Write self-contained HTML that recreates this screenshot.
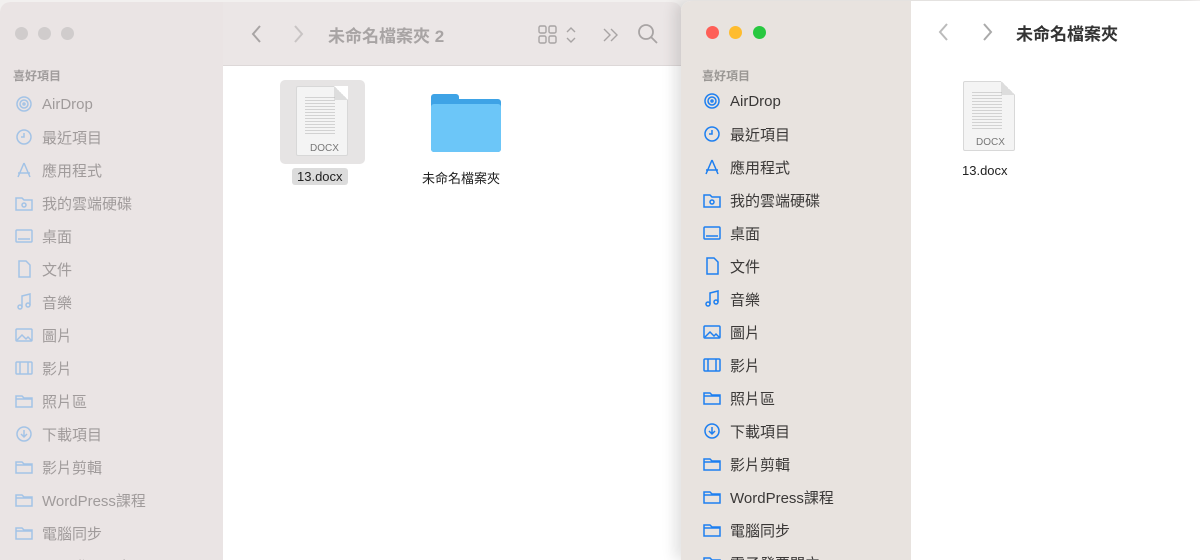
<!DOCTYPE html><html><head><meta charset="utf-8"><style>
*{margin:0;padding:0;box-sizing:border-box}
html,body{width:1200px;height:560px;overflow:hidden}
body{background:#f2f0ef;font-family:"Liberation Sans","Noto Sans CJK TC",sans-serif;position:relative}
.w{position:absolute;overflow:hidden}
.sb{position:absolute;top:0;bottom:0}
.it{position:absolute;left:0;height:24px;display:flex;align-items:center;font-size:15px;white-space:nowrap;width:200px}
.it svg{width:18px;height:18px;margin-right:9px;flex:none}
.dot{position:absolute;width:13px;height:13px;border-radius:50%}
.hd{position:absolute;font-size:12px;font-weight:bold}
</style></head><body>
<div class="w" style="left:0;top:2px;width:682px;height:558px;background:#fff;border-radius:10px 10px 0 0">
 <div class="sb" style="left:0;width:223px;background:#eae4e4">
  <div class="dot" style="left:15px;top:25px;background:#d0cccc"></div>
  <div class="dot" style="left:38px;top:25px;background:#d0cccc"></div>
  <div class="dot" style="left:61px;top:25px;background:#d0cccc"></div>
  <div class="hd" style="left:13px;top:65px;color:#a09c9c">喜好項目</div>
 </div>
 <div style="position:absolute;left:223px;top:0;width:459px;height:64px;background:#ebe6e6;border-bottom:1px solid #ddd8d8">
  <svg style="position:absolute;left:27px;top:22px" width="14" height="20"><path d="M10 2L3 10L10 18" stroke="#a8a4a4" stroke-width="2" fill="none"/></svg>
  <svg style="position:absolute;left:68px;top:22px" width="14" height="20"><path d="M4 2L11 10L4 18" stroke="#c8c4c4" stroke-width="2" fill="none"/></svg>
  <div style="position:absolute;left:105px;top:20px;font-size:17px;font-weight:bold;color:#a8a4a4">未命名檔案夾 2</div>
  <svg style="position:absolute;left:315px;top:23px" width="40" height="20" fill="none" stroke="#a8a4a4" stroke-width="1.4"><rect x="1" y="1" width="7" height="7" rx="1.5"/><rect x="11" y="1" width="7" height="7" rx="1.5"/><rect x="1" y="11" width="7" height="7" rx="1.5"/><rect x="11" y="11" width="7" height="7" rx="1.5"/><path d="M29 7l4-4 4 4M29 13l4 4 4-4"/></svg>
  <svg style="position:absolute;left:378px;top:25px" width="20" height="16" fill="none" stroke="#a8a4a4" stroke-width="1.4"><path d="M3 2l6 6-6 6M10 2l6 6-6 6"/></svg>
  <svg style="position:absolute;left:414px;top:21px" width="22" height="22" fill="none" stroke="#a8a4a4" stroke-width="1.8"><circle cx="9" cy="9" r="7"/><path d="M14 14l6 6"/></svg>
 </div>
 <div style="position:absolute;left:280px;top:78px;width:85px;height:84px;background:#e6e4e4;border-radius:5px"></div>
 <div style="position:absolute;left:296px;top:84px;width:52px;height:70px;background:#f4f4f4;border:1px solid #d8d8d8;border-radius:2px"><div style="position:absolute;right:-1px;top:-1px;width:14px;height:14px;background:linear-gradient(225deg,#fff 50%,#ddd 50%)"></div><div style="position:absolute;left:8px;top:10px;width:30px;height:38px;background:repeating-linear-gradient(#bbb 0 1px,transparent 1px 3px);opacity:.6"></div><div style="position:absolute;left:13px;top:56px;font-size:10px;color:#777">DOCX</div></div>
 <div style="position:absolute;left:292px;top:166px;padding:1px 5px;background:#dcdcdc;border-radius:3px;font-size:13px;color:#222">13.docx</div>
 <div style="position:absolute;left:431px;top:92px;width:70px;height:58px"><div style="position:absolute;left:0;top:0;width:28px;height:10px;background:#3ea3e6;border-radius:3px 3px 0 0"></div><div style="position:absolute;left:0;top:5px;width:70px;height:53px;background:#3ea3e6;border-radius:3px"></div><div style="position:absolute;left:0;top:10px;width:70px;height:48px;background:#6cc6f8;border-radius:3px"></div></div>
 <div style="position:absolute;left:422px;top:166px;font-size:13px;color:#222">未命名檔案夾</div>
</div>
<div class="w" style="left:681px;top:1px;width:519px;height:559px;background:#fff;border-radius:10px 0 0 0;box-shadow:-6px 0 14px rgba(0,0,0,.12)">
 <div class="sb" style="left:0;width:230px;background:#e8e3df">
  <div class="dot" style="left:25px;top:25px;background:#fe5f57"></div>
  <div class="dot" style="left:48px;top:25px;background:#febc2e"></div>
  <div class="dot" style="left:72px;top:25px;background:#28c840"></div>
  <div class="hd" style="left:21px;top:66px;color:#9a9794">喜好項目</div>
 </div>
 <svg style="position:absolute;left:256px;top:21px" width="14" height="20"><path d="M10 2L3 10L10 18" stroke="#bbb" stroke-width="2" fill="none"/></svg>
 <svg style="position:absolute;left:299px;top:21px" width="14" height="20"><path d="M4 2L11 10L4 18" stroke="#aaa" stroke-width="2" fill="none"/></svg>
 <div style="position:absolute;left:335px;top:19px;font-size:17px;font-weight:bold;color:#333">未命名檔案夾</div>
 <div style="position:absolute;left:282px;top:80px;width:52px;height:70px;background:#f4f4f4;border:1px solid #d8d8d8;border-radius:2px"><div style="position:absolute;right:-1px;top:-1px;width:14px;height:14px;background:linear-gradient(225deg,#fff 50%,#ddd 50%)"></div><div style="position:absolute;left:8px;top:10px;width:30px;height:38px;background:repeating-linear-gradient(#bbb 0 1px,transparent 1px 3px);opacity:.6"></div><div style="position:absolute;left:12px;top:55px;font-size:10px;color:#777">DOCX</div></div>
 <div style="position:absolute;left:281px;top:162px;font-size:13px;color:#222">13.docx</div>
</div>
<div id="L" style="position:absolute;left:15px;top:0;width:205px;height:560px;overflow:hidden"></div>
<div id="R" style="position:absolute;left:703px;top:0;width:205px;height:560px;overflow:hidden"></div>
<script>
var names=["AirDrop","最近項目","應用程式","我的雲端硬碟","桌面","文件","音樂","圖片","影片","照片區","下載項目","影片剪輯","WordPress課程","電腦同步","電子發票開立"];
var ic=["<circle cx='9' cy='9' r='7'/><circle cx='9' cy='9' r='4'/><circle cx='9' cy='9' r='1'/>","<circle cx='9' cy='9' r='7'/><path d='M9 5v4H6'/>","<path d='M9 2L3 16M9 2l6 14M3 12h12'/>","<path d='M1 4h6l2 2h8v10H1z'/><circle cx='9' cy='11' r='2'/>","<rect x='1' y='3' width='16' height='12' rx='1'/><path d='M3 12h12'/>","<path d='M4 1h7l4 4v12H4z'/>","<path d='M7 14V3l8-2v11'/><circle cx='5' cy='14' r='2'/><circle cx='13' cy='12' r='2'/>","<rect x='1' y='3' width='16' height='12' rx='1'/><path d='M2 14l5-5 4 4 2-2 4 4'/>","<rect x='1' y='3' width='16' height='12' rx='1'/><path d='M5 3v12M13 3v12'/>"];
var fold="<path d='M1 4h6l2 2h8v9H1z'/><path d='M1 7h16'/>";
function build(id,top,col,tc){var h="";for(var i=0;i<names.length;i++){var y=top+i*33-12;h+="<div class='it' style='top:"+y+"px;color:"+tc+"'><svg viewBox='0 0 18 18' fill='none' stroke='"+col+"' stroke-width='1.5'>"+(ic[i]||(i==10?"<circle cx='9' cy='9' r='7'/><path d='M9 5v7M6 9l3 3 3-3'/>":fold))+"</svg><span>"+names[i]+"</span></div>";}document.getElementById(id).innerHTML=h;}
build("L",104,"#a3c3e6","#a09b9b");
build("R",101,"#1d7ff0","#3a3837");
</script>
</body></html>
